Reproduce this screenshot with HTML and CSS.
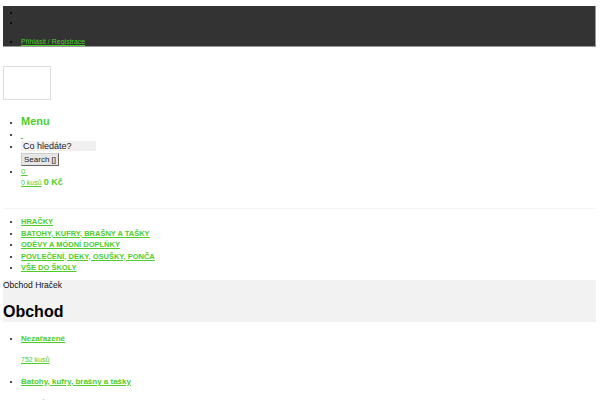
FILE: index.html
```html
<!DOCTYPE html>
<html lang="cs">
<head>
<meta charset="utf-8">
<title>Obchod</title>
<link rel="stylesheet" href="styles.css">
</head>
<body>
<header class="topbar">
  <ul class="toplist">
    <li>&nbsp;</li>
    <li>&nbsp;</li>
    <li class="login"><a href="#">Přihlásit / Registrace</a></li>
  </ul>
</header>
<div class="logo"></div>
<ul class="menu">
  <li class="menu-title"><span>Menu</span></li>
  <li class="empty"><a href="#">&nbsp;</a></li>
  <li class="search">
    <input class="search-input" type="text" placeholder="Co hledáte?">
    <button class="search-btn">Search []</button>
  </li>
  <li class="cart">
    <a href="#" class="count">0&nbsp;</a>
    <div class="cart-line"><a href="#" class="kusu">0 kusů</a> <a href="#" class="price">0 Kč</a></div>
  </li>
</ul>
<hr class="divider">
<ul class="nav">
  <li><a href="#">HRAČKY</a></li>
  <li><a href="#">BATOHY, KUFRY, BRAŠNY A TAŠKY</a></li>
  <li><a href="#">ODĚVY A MÓDNÍ DOPLŇKY</a></li>
  <li><a href="#">POVLEČENÍ, DEKY, OSUŠKY, PONČA</a></li>
  <li><a href="#">VŠE DO ŠKOLY</a></li>
</ul>
<section class="band">
  <div class="crumb">Obchod Hraček</div>
  <h1 class="title">Obchod</h1>
</section>
<ul class="cats">
  <li>
    <a href="#" class="cat-name">Nezařazené</a>
    <a href="#" class="cat-count">752 kusů</a>
  </li>
  <li>
    <a href="#" class="cat-name">Batohy, kufry, brašny a tašky</a>
    <a href="#" class="cat-count">20 kusů</a>
  </li>
</ul>
</body>
</html>
```
FILE: styles.css
```css
html, body {
  background: #fff;
}
body {
  margin: 6px 4px 0 3px;
  font-family: "Liberation Sans", Arial, sans-serif;
  font-size: 8px;
  color: #111;
}
a {
  color: #4ccd2a;
}
ul {
  margin: 0;
  padding: 0 0 0 18px;
}
.topbar {
  background: #333;
  height: 40px;
  border-right: 1px solid #999;
  border-bottom: 1px solid #999;
}
.toplist {
  padding-top: 2px;
  color: #000;
  line-height: 10px;
}
.toplist .login {
  margin-top: 9px;
  font-size: 7px;
}
.logo {
  width: 46px;
  height: 32px;
  border: 1px solid #ddd;
  margin-top: 19px;
}
.menu {
  margin-top: 14px;
  line-height: 11px;
}
.menu-title {
  line-height: 14px;
}
.menu-title span {
  font-size: 11px;
  font-weight: bold;
  color: #4ccd2a;
}
.empty {
  line-height: 10px;
}
.search {
  padding-top: 1px;
}
.search-input {
  display: block;
  width: 75px;
  height: 10px;
  box-sizing: border-box;
  border: none;
  background: #f0f0f0;
  font-family: inherit;
  font-size: 9px;
  padding: 0 2px;
  margin: 0;
}
.search-input::placeholder {
  color: #222;
}
.search-btn {
  display: block;
  margin-top: 2px;
  height: 13px;
  padding: 0 2px;
  font-family: inherit;
  font-size: 8px;
  background: #e6e6e6;
  border: 1px solid #888;
  border-color: #ccc #666 #666 #ccc;
  color: #222;
}
.cart {
  line-height: 11px;
}
.kusu {
  font-size: 7px;
}
.price {
  font-weight: bold;
  font-size: 9px;
  text-decoration: none;
}
.divider {
  border: 0;
  border-top: 1px solid #f4f4f4;
  margin: 20px 0 0;
}
.nav {
  margin-top: 7px;
  line-height: 11.5px;
  font-weight: bold;
  font-size: 7.5px;
}
.band {
  background: #f2f2f2;
  margin-top: 6px;
  height: 42px;
}
.crumb {
  line-height: 10px;
  font-size: 8.5px;
  color: #111;
}
.title {
  margin: 0;
  font-size: 16px;
  line-height: 20px;
  margin-top: 12px;
  color: #000;
}
.cats {
  margin-top: 11px;
}
.cats li {
  margin-bottom: 11px;
}
.cat-name {
  display: block;
  font-weight: bold;
  font-size: 8px;
  line-height: 12px;
}
.cat-count {
  display: block;
  font-size: 7px;
  margin-top: 10px;
  line-height: 10px;
}
```
